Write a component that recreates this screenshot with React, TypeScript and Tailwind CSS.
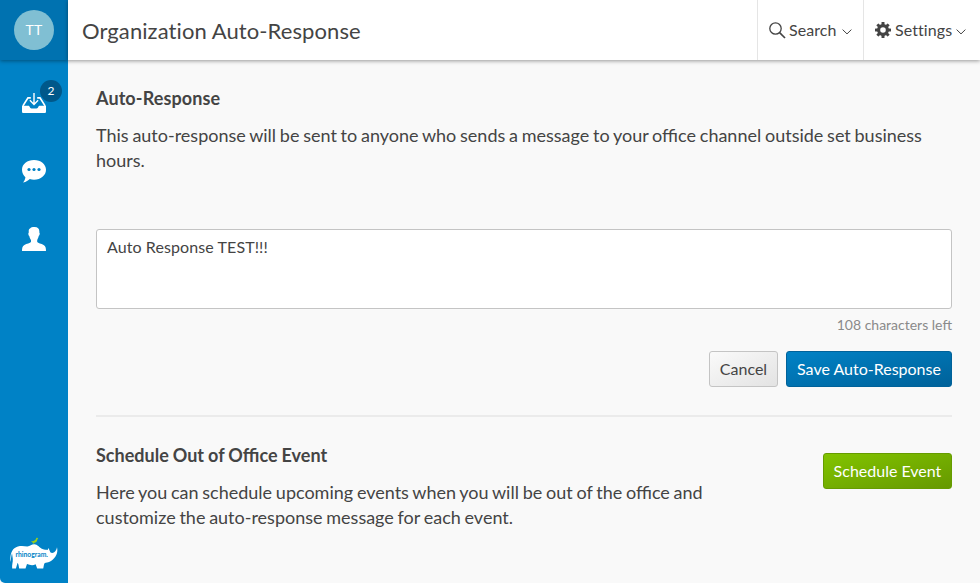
import React from "react";

function InboxIcon() {
  return (
    <svg width="24" height="21" viewBox="0 0 24 21" fill="none">
      <path d="M0 12.7H6.3C7 12.7 7.3 13 7.6 13.7C8.3 15.1 9.2 15.6 10.4 15.6H13.6C14.8 15.6 15.7 15.1 16.4 13.7C16.7 13 17 12.7 17.7 12.7H24V18.6C24 19.6 23.4 20.1 22.5 20.1H1.5C.6 20.1 0 19.6 0 18.6Z" fill="#fff" />
      <path d="M.9 12.9L6 4.8H8.8M15.2 4.8H18L23.1 12.9" stroke="#fff" strokeWidth="1.7" />
      <path d="M12 0V11.3M7.9 7.3L12 11.4L16.1 7.3" stroke="#fff" strokeWidth="1.4" />
    </svg>
  );
}

function ChatIcon() {
  return (
    <svg width="24" height="23" viewBox="0 0 24 23">
      <path d="M12 0C5.3 0 0 4.2 0 9.7C0 12.8 1.5 15.5 3.4 17.2C3.2 19.4 2.2 21.2 1 22.4C4.2 22.2 6.3 20.5 7.8 19.1C9.1 19.5 10.5 19.7 12 19.7C18.8 19.7 24 15.4 24 9.8S18.7 0 12 0Z" fill="#fff" />
      <g fill="#0082c6">
        <circle cx="7" cy="9.5" r="1.6" />
        <circle cx="12" cy="9.5" r="1.6" />
        <circle cx="17" cy="9.5" r="1.6" />
      </g>
    </svg>
  );
}

function PersonIcon() {
  return (
    <svg width="24" height="24" viewBox="0 0 24 24">
      <path d="M12 0C15.8-.1 17.7 1.6 17.3 5.4C18.1 6 17.7 8.4 16.7 9C16.4 10.7 15.6 12 15.2 12.9V15.1C16.1 16.4 19.3 16.8 21.6 18C23.6 19.1 24 21 24 24H0C0 21 .4 19.1 2.4 18C4.7 16.8 8.1 16.4 9 15.1V12.9C8.3 12 7.6 10.7 7.3 9C6.3 8.4 6 6 6.8 5.4C6.5 2.8 7 1.8 8.3 1.2C9.3.2 10.5 0 12 0Z" fill="#fff" />
    </svg>
  );
}

function RhinoLogo() {
  return (
    <svg className="overflow-visible" width="50" height="34" viewBox="0 0 50 34">
      <path d="M1.4 23C1 17 2 12 5.4 9.3C9 6.4 14 7 18.3 7.5C21 6.9 22.8 5.1 25.4 5.2C28.3 5.3 30.5 8.5 33.5 10C35.5 10.7 37.2 10.8 38.6 11L39.5 8.9L40.8 12C41.2 13.9 43.2 14.6 45.2 13.2C46.9 12 47.6 10.2 48 8.3C49.4 13.5 46.7 19.2 42 22C39.3 23.7 36.8 23.3 35.3 24.4C34.7 26.4 34.6 28 34.2 29.6H28.2L26.6 25.2C23.9 26.8 20.8 26.1 18 25L16.5 29.6H10.2C9.7 27.3 9.7 25.5 8.6 23.8L6.9 29.6H3.2C2.7 26 4.1 23 3.8 20C3.5 17.7 3.3 15.8 3 14.2C2 17 2.2 20.2 1.4 23Z" fill="#fff" />
      <path d="M22 2C24.4 2.9 25.6 1.6 27 0L27.4-1.3L29.2-1L28.3.8C28.1 2.7 26.8 3.7 25.4 3.8L24.6 5.2L24.1 3.7C23.1 3.5 22.5 2.8 22 2Z" fill="#9bcf19" />
      <text x="6.5" y="18.2" fontSize="7.6" fontWeight="700" textLength="32.4" lengthAdjust="spacingAndGlyphs" fill="#0082c6">rhinogram.</text>
    </svg>
  );
}

function SearchIcon() {
  return (
    <svg width="17" height="17" viewBox="0 0 17 17" fill="none" stroke="#444" strokeWidth="1.3">
      <circle cx="6.5" cy="6.5" r="5.7" />
      <path d="M10.6 10.7L16 16" strokeWidth="1.7" />
    </svg>
  );
}

const teeth = [0, 45, 90, 135, 180, 225, 270, 315];

function GearIcon() {
  return (
    <svg width="16" height="16" viewBox="0 0 16 16">
      <circle cx="8" cy="8" r="4.4" fill="none" stroke="#444" strokeWidth="3.2" />
      {teeth.map((a) => (
        <rect key={a} x="6.5" y="0" width="3" height="3.2" rx=".5" fill="#444" transform={`rotate(${a} 8 8)`} />
      ))}
    </svg>
  );
}

function Chevron() {
  return (
    <svg className="mt-[3px]" width="10" height="6" viewBox="0 0 10 6" fill="none" stroke="#444">
      <path d="M.6 .6L5 4.9L9.4 .6" />
    </svg>
  );
}

export default function App() {
  return (
    <div className="flex h-[583px] w-[980px] overflow-hidden bg-[#f9f9f9] font-['Lato',sans-serif] text-[#444]">
      <aside className="flex w-[68px] shrink-0 flex-col items-center rounded-bl-[5px] bg-[#0082c6]">
        <div className="flex h-[60px] w-full shrink-0 items-center justify-center bg-[#0072b0] shadow-[0_1px_4px_rgba(0,0,0,0.4)]">
          <div className="flex size-10 items-center justify-center rounded-full bg-[#80bfd3] text-sm tracking-[0.3px] text-white">TT</div>
        </div>
        <nav className="flex flex-col items-center">
          <div className="relative mt-[33px] h-[21px]">
            <InboxIcon />
            <span className="absolute -top-[13px] left-[18px] flex size-[22px] items-center justify-center rounded-full bg-[#00588a] text-xs text-white">2</span>
          </div>
          <div className="mt-[46px] h-[23px]"><ChatIcon /></div>
          <div className="mt-11 h-6"><PersonIcon /></div>
        </nav>
        <div className="mt-auto mb-[10px] h-[34px]"><RhinoLogo /></div>
      </aside>

      <div className="flex min-w-0 flex-1 flex-col">
        <header className="flex h-[60px] shrink-0 items-stretch bg-white shadow-[0_1px_4px_rgba(0,0,0,0.4)]">
          <h1 className="flex flex-1 items-center pt-px pl-[14px] text-[22px] tracking-[0.09px]">Organization Auto-Response</h1>
          <button className="flex w-[106px] items-center border-l border-[#e5e5e5] pl-[11px] text-base">
            <SearchIcon />
            <span className="mr-[5px] ml-[3px] tracking-[0.08px]">Search</span>
            <Chevron />
          </button>
          <button className="flex w-[117px] items-center border-l border-[#e5e5e5] pl-[11px] text-base">
            <GearIcon />
            <span className="mr-[4px] ml-[4px] tracking-[0.08px]">Settings</span>
            <Chevron />
          </button>
        </header>

        <main className="flex flex-col px-7 pt-[26px]">
          <h2 className="text-lg leading-[25px] font-bold tracking-[0.1px]">Auto-Response</h2>
          <p className="mt-3 text-lg leading-[25px] [word-spacing:-0.86px]">
            This auto-response will be sent to anyone who sends a message to your office channel outside set business hours.
          </p>
          <textarea
            className="mt-14 block h-20 w-full resize-none rounded-[3px] border border-[#c4c4c4] bg-white px-[10px] py-[6px] text-base leading-[22px] tracking-[0.09px] outline-none"
            defaultValue="Auto Response TEST!!!"
          />
          <div className="mt-[6px] text-right text-sm leading-5 text-[#8a8a8a]">108 characters left</div>
          <div className="mt-4 flex justify-end gap-2">
            <button className="h-9 w-[69px] rounded-[3px] border border-[#c4c4c4] bg-linear-to-br from-[#fafafa] to-[#e3e3e3] text-base">Cancel</button>
            <button className="h-9 w-[166px] rounded-[3px] border border-[#00629a] bg-linear-to-br from-[#0082c6] to-[#00629a] text-base text-white">Save Auto-Response</button>
          </div>
          <hr className="mt-7 border-t-2 border-[#ebebeb]" />
          <section className="mt-[26px] flex items-start justify-between">
            <div className="w-[620px]">
              <h2 className="text-lg leading-[25px] font-bold [word-spacing:-0.35px]">Schedule Out of Office Event</h2>
              <p className="mt-3 text-lg leading-[25px] [word-spacing:-0.86px]">
                Here you can schedule upcoming events when you will be out of the office and customize the auto-response message for each event.
              </p>
            </div>
            <button className="mt-[10px] h-9 w-[129px] rounded-[3px] border border-[#669c00] bg-linear-to-br from-[#82c400] to-[#669900] text-base text-white">Schedule Event</button>
          </section>
        </main>
      </div>
    </div>
  );
}
